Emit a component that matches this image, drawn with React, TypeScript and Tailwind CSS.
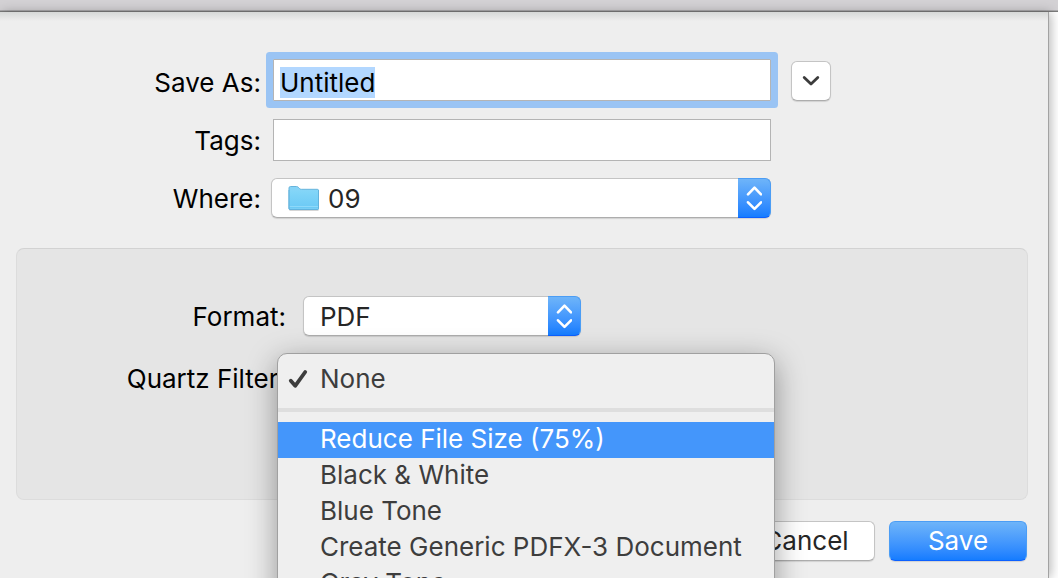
import { useEffect, useRef, useState } from "react";

const filters = [
  "Reduce File Size (75%)",
  "Black & White",
  "Blue Tone",
  "Create Generic PDFX-3 Document",
  "Gray Tone",
  "Lightness Decrease",
];

const field = "h-[42px] w-full border border-[#b4b4b4] bg-white px-[6px] pt-1 text-black outline-none";
const control =
  "h-10 w-full appearance-none rounded-md border border-[#c4c4c4] border-b-[#adadad] bg-white text-[#262626] shadow-[0_1px_1px_rgba(0,0,0,0.12)] outline-none";
const blue =
  "border border-[#4b9df5] border-b-[#0c60ff] bg-linear-to-b from-[#6eb4f9] to-[#147cff] text-white";

function Stepper() {
  return (
    <span
      className={`pointer-events-none absolute inset-y-0 right-0 flex w-[33px] items-center justify-center rounded-r-md border-l-0 ${blue}`}
    >
      <svg width="16" height="26" viewBox="0 0 16 26" fill="none" stroke="currentColor" strokeWidth="2.6" strokeLinecap="round" strokeLinejoin="round">
        <path d="M2 9.300 8.500 2.700 15 9.300M2 17.300 8.500 23.900 15 17.300" />
      </svg>
    </span>
  );
}

function Folder() {
  return (
    <svg className="pointer-events-none absolute top-[7px] left-[17px]" width="32" height="27" viewBox="0 0 32 27">
      <defs>
        <linearGradient id="folder" x1="0" y1="0" x2="0" y2="1">
          <stop offset="0" stopColor="#83d6f8" />
          <stop offset="1" stopColor="#6bc9f5" />
        </linearGradient>
      </defs>
      <path d="M1.500 25.500h29" stroke="#d5d5d5" />
      <path d="M1 3Q1 1.500 2.500 1.500h6q1 0 1.800.8l1.200 1.200q.8.8 1.800.8H29.300q1.200 0 1.200 1.200V23.500q0 1-1 1H2q-1 0-1-1Z" fill="#86d4f7" stroke="#67b4dc" />
      <path d="M1.500 5.500h28.500v18H1.500Z" fill="url(#folder)" />
      <path d="M1.500 21.500h28.500" stroke="#8ed9fa" />
      <path d="M1 5V23.500q0 1 1 1h27.500q1 0 1-1V5" fill="none" stroke="#62b2dc" />
    </svg>
  );
}

export default function App() {
  const nameRef = useRef<HTMLInputElement>(null);
  const [name, setName] = useState("Untitled");
  const [filter, setFilter] = useState("None");

  useEffect(() => {
    nameRef.current?.focus();
    nameRef.current?.select();
  }, []);

  return (
    <div className="flex h-screen flex-col overflow-hidden bg-white font-[Inter,'Liberation_Sans',sans-serif] text-[26px] leading-[34px] text-black">
      <header className="h-3 shrink-0 border-b border-[#7c7c7c] bg-[#d3d1d4] shadow-[inset_0_-1px_0_#acabad]" />
      <form
        className="mr-[9px] flex-1 border-r border-[#a2a2a2] bg-[#eeeeee] bg-[linear-gradient(#d6d8d7,#eeeeee_9px)] pt-[47px] shadow-[2px_0_10px_rgba(0,0,0,0.28)]"
        onSubmit={(e) => e.preventDefault()}
      >
        <div className="mr-[217px] grid grid-cols-[261px_minmax(0,1fr)_40px] items-center">
          <label htmlFor="name" className="pt-[6px] text-right">Save As:</label>
          <div className="pr-5 pl-3">
            <input
              id="name"
              ref={nameRef}
              value={name}
              onChange={(e) => setName(e.target.value)}
              className={`${field} rounded-[1px] ring-[7px] ring-[#9ac4f4] selection:bg-[#b2d7ff] selection:text-black`}
            />
          </div>
          <button
            type="button"
            aria-label="Show more"
            className={`${control} mt-[2px] flex items-center justify-center`}
          >
            <svg width="18" height="12" viewBox="0 0 18 12" fill="none" stroke="#3c3c3c" strokeWidth="2.8" strokeLinecap="round" strokeLinejoin="round">
              <path d="M2.200 2.500 9 9 15.800 2.500" />
            </svg>
          </button>

          <label htmlFor="tags" className="pt-5 text-right">Tags:</label>
          <div className="pt-[18px] pr-5 pl-3">
            <input id="tags" className={field} />
          </div>
          <span />

          <label htmlFor="where" className="pt-[19px] text-right">Where:</label>
          <div className="pt-[17px] pr-5 pl-[10px]">
            <div className="relative">
              <select id="where" className={`${control} block pt-[2px] pl-14`}>
                <option>09</option>
              </select>
              <Folder />
              <Stepper />
            </div>
          </div>
        </div>

        <section className="mt-[30px] mr-5 ml-4 h-[252px] rounded-lg border border-[#dcdcdc] border-t-[#d2d2d2] bg-[#e5e5e5] pt-[47px]">
          <div className="flex items-center">
            <label htmlFor="format" className="w-[269px] pt-[2px] text-right">Format:</label>
            <div className="relative ml-[17px] w-[278px]">
              <select id="format" className={`${control} block pt-[2px] pl-4`}>
                <option>PDF</option>
              </select>
              <Stepper />
            </div>
          </div>
          <div className="relative mt-[25px]">
            <div id="filter" className="w-[269px] text-right leading-9">Quartz Filter:</div>
            <div
              role="menu"
              aria-labelledby="filter"
              className="absolute top-[-8px] left-[260px] z-10 w-[498px] rounded-[10px] border border-[#a0a0a0] bg-[#efefef] py-[7px] text-[#3d3d3d] shadow-[0_8px_30px_rgba(0,0,0,0.38)]"
            >
              <button
                type="button"
                role="menuitemradio"
                aria-checked={filter === "None"}
                onClick={() => setFilter("None")}
                className="flex h-9 w-full items-center pl-[10px] text-left"
              >
                <span className="w-8">
                  {filter === "None" && (
                    <svg width="20" height="20" viewBox="0 0 20 20" fill="none" stroke="#3d3d3d" strokeLinecap="round" strokeLinejoin="round">
                      <path d="M2.800 11.800 7.200 16.800 17.200 3" strokeWidth="3.800" />
                    </svg>
                  )}
                </span>
                None
              </button>
              <hr className="mt-[11px] mb-[10px] h-1 border-0 bg-[#dedede]" />
              {filters.map((f, i) => (
                <button
                  key={f}
                  type="button"
                  role="menuitemradio"
                  aria-checked={filter === f}
                  onClick={() => setFilter(f)}
                  className={`block h-9 w-full pb-[2px] pl-[42px] text-left whitespace-nowrap ${i === 0 ? "bg-[#4496fb] text-white" : ""}`}
                >
                  {f}
                </button>
              ))}
            </div>
          </div>
        </section>

        <footer className="mt-[21px] mr-[21px] flex justify-end gap-[14px]">
          <div className="w-[138px]">
            <button type="button" className={control}>Cancel</button>
          </div>
          <button type="submit" className={`h-10 w-[138px] rounded-md shadow-[0_1px_1px_rgba(0,0,0,0.12)] ${blue}`}>
            Save
          </button>
        </footer>
      </form>
    </div>
  );
}
